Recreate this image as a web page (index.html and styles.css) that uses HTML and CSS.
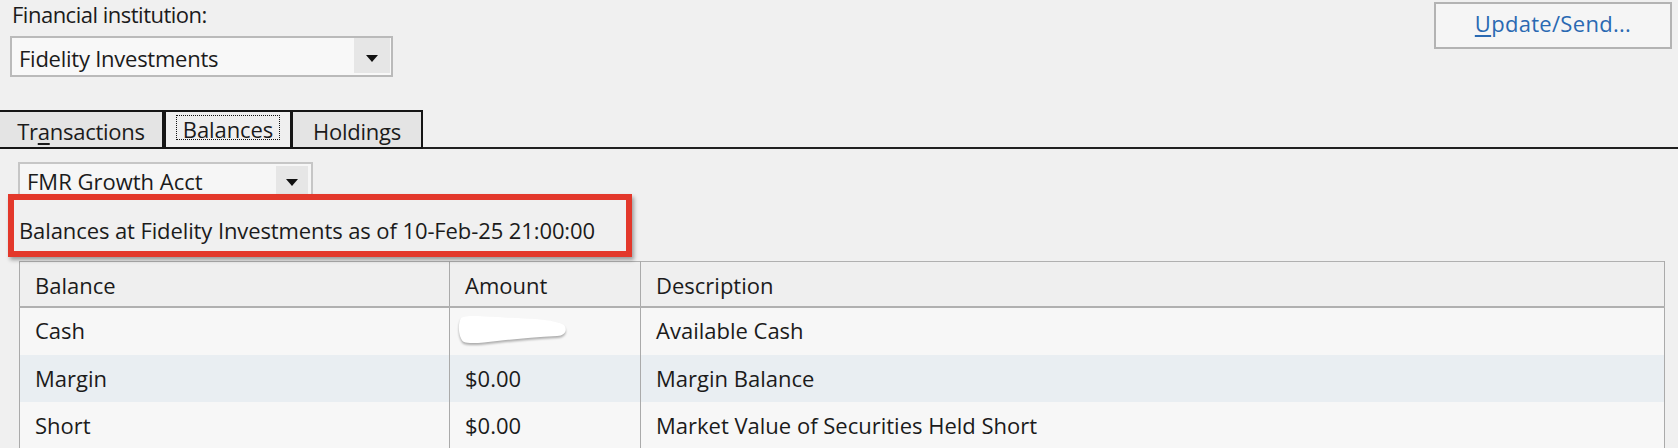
FILE: index.html
```html
<!DOCTYPE html>
<html>
<head>
<meta charset="utf-8">
<link rel="stylesheet" href="styles.css">
</head>
<body>
<div class="app">
  <div class="top">
    <div class="inst">
      <div class="label">Financial institution:</div>
      <div class="combo combo-fi">
        <span class="value">Fidelity Investments</span>
        <span class="drop"><span class="tri"></span></span>
      </div>
    </div>
    <button class="btn"><u>U</u>pdate/Send...</button>
  </div>

  <div class="tabs">
    <div class="tab tab-tx">Tr<u>a</u>nsactions</div>
    <div class="tab tab-bal sel"><span class="focus">Balances</span></div>
    <div class="tab tab-hold">Holdin<u>g</u>s</div>
  </div>

  <div class="panel">
    <div class="combo combo-acct">
      <span class="value">FMR Growth Acct</span>
      <span class="drop"><span class="tri"></span></span>
    </div>
    <div class="caption">Balances at Fidelity Investments as of 10-Feb-25 21:00:00</div>

    <table class="grid">
      <thead>
        <tr><th class="c1">Balance</th><th class="c2">Amount</th><th class="c3">Description</th></tr>
      </thead>
      <tbody>
        <tr class="first"><td>Cash</td><td><svg class="smudge" width="112" height="34" viewBox="0 0 112 34"><path d="M4,5 C10,1 30,4 60,5 C80,6 98,7 107,12 C111,17 108,23 100,23 C80,24 60,26 40,28 C25,30 12,31 7,29 C2,26 0,12 4,5 Z" fill="#ffffff"/></svg></td><td>Available Cash</td></tr>
        <tr class="alt"><td>Margin</td><td>$0.00</td><td>Margin Balance</td></tr>
        <tr><td>Short</td><td>$0.00</td><td>Market Value of Securities Held Short</td></tr>
      </tbody>
    </table>
  </div>

  <div class="highlight"></div>
</div>
</body>
</html>
```

FILE: styles.css
```css
* { box-sizing: border-box; }
html, body { margin: 0; padding: 0; }
body {
  background: #f0f0f0;
  font-family: "Open Sans", "Noto Sans", sans-serif;
  font-size: 22px;
  color: #1b1b1b;
  width: 1678px;
  height: 448px;
  overflow: hidden;
}
.app { position: relative; height: 448px; }

.top {
  display: flex;
  justify-content: space-between;
  align-items: flex-start;
  height: 110px;
}
.inst { padding-left: 10px; }
.label {
  font-size: 22px;
  line-height: 28px;
  padding-left: 2px;
  letter-spacing: -0.5px;
  height: 36px;
}
.combo {
  display: flex;
  align-items: stretch;
  background: #f8f8f8;
  border: 2px solid #bababa;
}
.combo .value {
  flex: 1;
  display: flex;
  align-items: center;
}
.combo .drop {
  display: flex;
  align-items: center;
  justify-content: center;
  background: #e6e6e6;
}
.tri {
  width: 0; height: 0;
  border-left: 6px solid transparent;
  border-right: 6px solid transparent;
  border-top: 7px solid #111;
}
.combo-fi { width: 383px; height: 41px; }
.combo-fi .value { padding-left: 7px; padding-top: 2px; letter-spacing: -0.25px; }
.combo-fi .drop { width: 36px; margin: 0 1px 2px 0; }
.combo-fi .tri { margin-top: 6px; }

.btn {
  margin: 2px 6px 0 0;
  width: 238px;
  height: 47px;
  background: #f5f5f5;
  border: 2px solid #b3b3b3;
  font-family: inherit;
  font-size: 22px;
  color: #2a69b2;
  letter-spacing: 0.3px;
  padding: 0 0 5px 0;
}
.btn u { text-decoration-thickness: 2px; text-underline-offset: 3px; }

.tabs {
  display: flex;
  height: 39px;
  border-bottom: 2px solid #202020;
}
.tab {
  height: 39px;
  margin-bottom: -2px;
  border: 2px solid #151515;
  background: #e4e4e4;
  display: flex;
  align-items: flex-start;
  justify-content: center;
  font-size: 22px;
  line-height: 28px;
  letter-spacing: -0.25px;
  padding-top: 5px;
}
.tab u { text-underline-offset: 3px; }
.tab-tx { width: 164px; border-left: none; }
.tab-bal { width: 129px; border-right-width: 3px; }
.tab-hold { width: 130px; border-left: none; }
.tab.sel { background: #efefef; padding-top: 3px; }
.focus {
  display: inline-block;
  height: 25px;
  border: 1px dotted #111;
  padding: 2px 6px 0 6px;
  line-height: 22px;
  letter-spacing: -0.1px;
}

.panel { padding: 13px 14px 0 19px; }
.combo-acct {
  width: 295px;
  height: 38px;
  margin-left: -1px;
  border: 2px solid #c6c6c6;
  background: #f6f6f6;
}
.combo-acct .value { padding-left: 7px; }
.combo-acct .drop { width: 32px; margin: 2px 3px 0 0; }

.caption {
  margin-top: 16px;
  line-height: 28px;
  height: 45px;
  letter-spacing: -0.1px;
}

.grid {
  border-collapse: collapse;
  width: 1646px;
  table-layout: fixed;
}
.grid th {
  text-align: left;
  font-weight: normal;
  background: #efefef;
  height: 45px;
  border-top: 1px solid #b0b0b0;
  border-bottom: 2px solid #b0b0b0;
  border-left: 1px solid #aaaaaa;
  border-right: 1px solid #aaaaaa;
  padding: 2px 0 0 15px;
}
.grid .c1 { width: 430px; }
.grid .c2 { width: 191px; }
.grid td {
  height: 47px;
  background: #f7f7f7;
  border-left: 1px solid #aaaaaa;
  border-right: 1px solid #aaaaaa;
  padding: 0 0 0 15px;
}
.grid td + td { border-left: 1px solid #dcdcdc; }
.grid tr.first td { height: 48px; padding-bottom: 2px; }
.grid tr.alt td { background: #e9eef2; }

.smudge {
  display: block;
  margin-left: -8px;
  filter: drop-shadow(0 2px 1px rgba(0,0,0,0.3));
}

.highlight {
  position: absolute;
  left: 8px;
  top: 194px;
  width: 624px;
  height: 63px;
  border: 6px solid #e3382b;
  box-shadow: 2px 3px 4px rgba(0,0,0,0.35);
}
```
